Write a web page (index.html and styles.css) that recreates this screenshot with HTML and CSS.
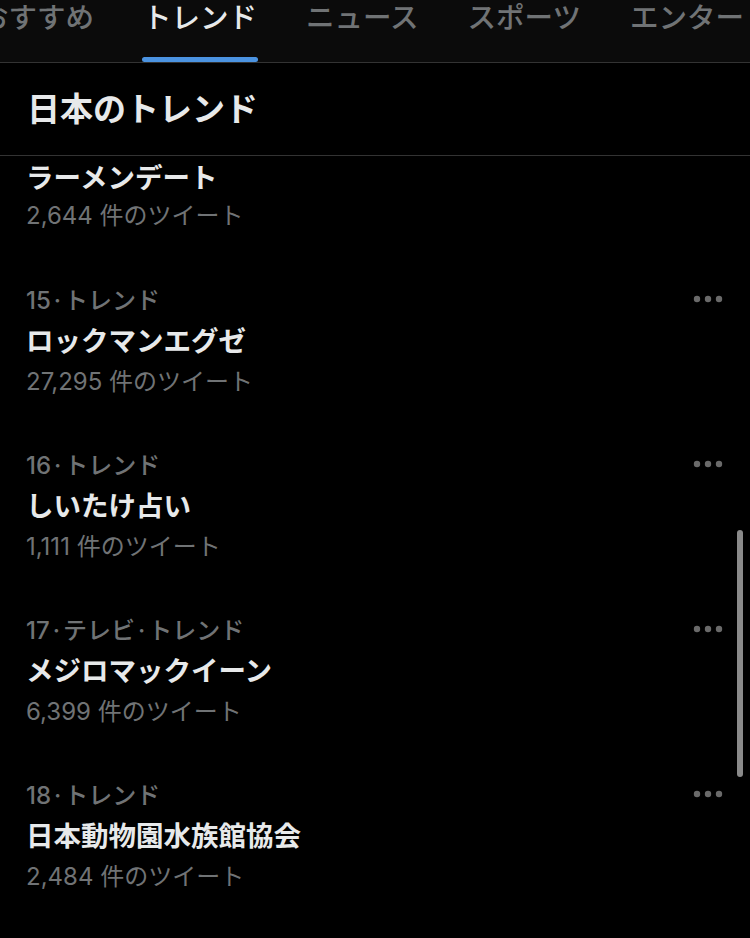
FILE: index.html
```html
<!DOCTYPE html>
<html lang="ja">
<head>
    <meta charset="UTF-8">
    <meta name="viewport" content="width=device-width, initial-scale=1.0">
    <title>トレンド</title>
    <link rel="stylesheet" href="styles.css">
</head>
<body>

    <div class="tabs">
        <div class="tab">おすすめ</div>
        <div class="tab active">トレンド</div>
        <div class="tab">ニュース</div>
        <div class="tab">スポーツ</div>
        <div class="tab">エンター</div>
    </div>

    <h2 class="section-title">日本のトレンド</h2>

    <div class="list">
        <div class="trend partial">
            <div class="name">ラーメンデート</div>
            <div class="count">2,644 件のツイート</div>
        </div>

        <div class="trend">
            <div class="meta-row">
                <div class="meta">15<span class="sep">·</span>トレンド</div>
                <svg class="more" width="30" height="8" viewBox="0 0 30 8"><circle cx="4" cy="4" r="3.2"/><circle cx="15" cy="4" r="3.2"/><circle cx="26" cy="4" r="3.2"/></svg>
            </div>
            <div class="name">ロックマンエグゼ</div>
            <div class="count">27,295 件のツイート</div>
        </div>

        <div class="trend">
            <div class="meta-row">
                <div class="meta">16<span class="sep">·</span>トレンド</div>
                <svg class="more" width="30" height="8" viewBox="0 0 30 8"><circle cx="4" cy="4" r="3.2"/><circle cx="15" cy="4" r="3.2"/><circle cx="26" cy="4" r="3.2"/></svg>
            </div>
            <div class="name">しいたけ占い</div>
            <div class="count">1,111 件のツイート</div>
        </div>

        <div class="trend">
            <div class="meta-row">
                <div class="meta">17<span class="sep">·</span>テレビ<span class="sep">·</span>トレンド</div>
                <svg class="more" width="30" height="8" viewBox="0 0 30 8"><circle cx="4" cy="4" r="3.2"/><circle cx="15" cy="4" r="3.2"/><circle cx="26" cy="4" r="3.2"/></svg>
            </div>
            <div class="name">メジロマックイーン</div>
            <div class="count">6,399 件のツイート</div>
        </div>

        <div class="trend">
            <div class="meta-row">
                <div class="meta">18<span class="sep">·</span>トレンド</div>
                <svg class="more" width="30" height="8" viewBox="0 0 30 8"><circle cx="4" cy="4" r="3.2"/><circle cx="15" cy="4" r="3.2"/><circle cx="26" cy="4" r="3.2"/></svg>
            </div>
            <div class="name">日本動物園水族館協会</div>
            <div class="count">2,484 件のツイート</div>
        </div>

        <div class="scrollbar"></div>
    </div>

</body>
</html>
```

FILE: styles.css
```css
body { margin: 0; background: #000; color: #e7e9ea; font-family: Inter, "Noto Sans CJK JP", sans-serif; overflow: hidden; width: 750px; height: 938px; }

.tabs { display: flex; align-items: flex-start; gap: 49px; height: 62px; margin-left: -20px; background: #0b0b0b; border-bottom: 1px solid #333; white-space: nowrap; overflow: hidden; }
.tab { position: relative; height: 62px; font-size: 28.5px; font-weight: 500; line-height: 36px; color: #707375; }
.tab.active { color: #e7e9ea; }
.tab.active::after { content: ""; position: absolute; left: -1px; right: -1px; bottom: 0; height: 5px; border-radius: 3px; background: #4b93e1; }

.section-title { margin: 0; padding: 0 27px; height: 92px; line-height: 92px; font-size: 33px; font-weight: 700; border-bottom: 1px solid #333; }

.list { position: relative; }
.trend { padding: 24px 27px 23px 26px; }
.trend.partial { padding-top: 0; padding-bottom: 24px; }
.meta-row { display: flex; justify-content: space-between; align-items: center; height: 36px; }
.meta { font-size: 24px; font-weight: 500; color: #707375; }
.sep { margin: 0 3px; }
.more { fill: #6a6a6a; margin-top: 2px; }
.name { font-size: 27.5px; font-weight: 700; line-height: 50px; }
.trend.partial .name { line-height: 44px; }
.count { font-size: 24px; color: #707375; line-height: 32px; }

.scrollbar { position: absolute; top: 374px; right: 7px; width: 6px; height: 247px; border-radius: 3px; background: #8a8a8a; }
```
